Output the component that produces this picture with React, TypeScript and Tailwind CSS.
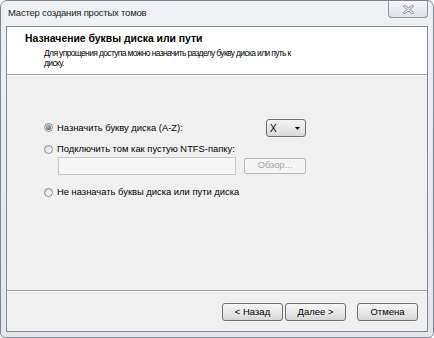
import React from "react";

function Radio({ checked }: { checked?: boolean }) {
  return (
    <span className="flex h-[9px] w-[9px] shrink-0 items-center justify-center rounded-full border border-[#8a8d91] bg-gradient-to-br from-[#d8d9da] to-[#fbfbfb]">
      {checked && (
        <span className="h-[5px] w-[5px] rounded-full bg-[radial-gradient(circle_at_40%_35%,#9fc3de,#1d4361)]" />
      )}
    </span>
  );
}

function WinButton({ label, disabled }: { label: string; disabled?: boolean }) {
  return (
    <div
      className={
        disabled
          ? "flex h-[16px] w-[62px] items-center justify-center rounded-[2px] border border-[#b5b9bd] bg-[#f4f4f4] text-[9.3px] text-[#a2a2a2]"
          : "flex h-[18px] w-[61px] items-center justify-center rounded-[3px] border border-[#707070] bg-gradient-to-b from-[#f6f6f6] via-[#e9e9e9] to-[#d6d6d6] text-[9.5px] text-black"
      }
    >
      {label}
    </div>
  );
}

export default function App() {
  return (
    <div className="relative flex h-[338px] w-[434px] flex-col rounded-t-[7px] rounded-b-[5px] border border-[#7d8690] bg-gradient-to-b from-[#eef1f4] to-[#e3e7eb] font-['Liberation_Sans',Arial,sans-serif] text-black">
      {/* title bar */}
      <div className="flex h-[25px] items-center pl-[7px] text-[9.5px] tracking-[-0.2px] text-[#1b1b1b]">
        Мастер создания простых томов
      </div>
      <div className="absolute right-[5px] top-0 flex h-[17px] w-[40px] items-center justify-center rounded-b-[4px] border border-t-0 border-[#8e99a4] bg-gradient-to-b from-[#f4f6f8] to-[#dfe4e9]">
        <svg width="11" height="9" viewBox="0 0 11 9">
          <path d="M1.5 1 L9.5 8 M9.5 1 L1.5 8" stroke="#7a848e" strokeWidth="2.6" strokeLinecap="round" />
          <path d="M1.5 1 L9.5 8 M9.5 1 L1.5 8" stroke="#f3f5f7" strokeWidth="1.1" strokeLinecap="round" />
        </svg>
      </div>

      {/* client area */}
      <div className="mx-[5px] flex h-[306px] flex-col border border-[#838c96] bg-[#f0f0f0]">
        <div className="h-[48px] border-b border-[#a0a0a0] bg-white pl-[18px] pt-[5px]">
          <div className="text-[10.4px] font-bold leading-[13px]">Назначение буквы диска или пути</div>
          <div className="mt-[3px] pl-[19px] text-[8.5px] leading-[10px] tracking-[-0.65px]">
            Для упрощения доступа можно назначить разделу букву диска или путь к
            <br />
            диску.
          </div>
        </div>
        <div className="h-px bg-white" />

        <div className="flex h-[214px] flex-col pl-[37px] pt-[43px] text-[9.4px]">
          <div className="flex h-[18px] w-[262px] items-center justify-between">
            <div className="flex items-center gap-[4px]">
              <Radio checked />
              <span>Назначить букву диска (A-Z):</span>
            </div>
            <div className="flex h-[18px] w-[40px] items-center justify-between rounded-[3px] border border-[#707070] bg-gradient-to-b from-[#f4f4f4] to-[#d9d9d9] pl-[3px] pr-[5px]">
              <span className="text-[10px]">X</span>
              <svg width="5" height="3" viewBox="0 0 5 3">
                <path d="M0 0 H5 L2.5 3 Z" fill="#000" />
              </svg>
            </div>
          </div>
          <div className="mt-[5px] flex h-[14px] items-center gap-[4px]">
            <Radio />
            <span>Подключить том как пустую NTFS-папку:</span>
          </div>
          <div className="ml-[14px] mt-px flex items-center gap-[8px]">
            <div className="h-[18px] w-[178px] border border-[#c3c6c9] bg-[#f6f6f6]" />
            <WinButton label="Обзор..." disabled />
          </div>
          <div className="mt-[10px] flex h-[14px] items-center gap-[4px]">
            <Radio />
            <span>Не назначать буквы диска или пути диска</span>
          </div>
        </div>

        <div className="h-px bg-[#a0a0a0]" />
        <div className="h-px bg-white" />
        <div className="flex h-[38px] items-start justify-end pr-[9px] pt-[11px]">
          <div className="flex gap-[2px]">
            <WinButton label="< Назад" />
            <WinButton label="Далее >" />
          </div>
          <div className="ml-[11px]">
            <WinButton label="Отмена" />
          </div>
        </div>
      </div>
    </div>
  );
}
